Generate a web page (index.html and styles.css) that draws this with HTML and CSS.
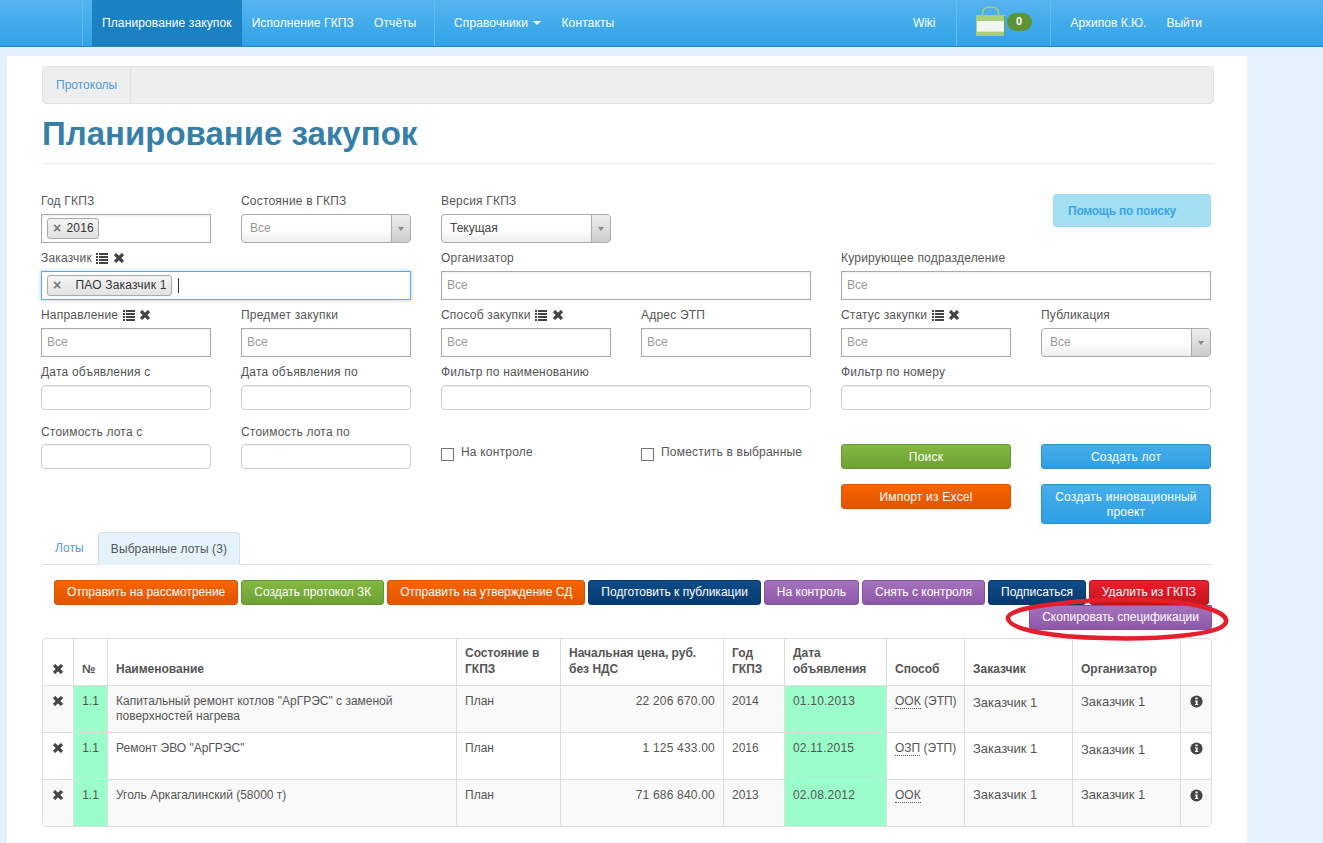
FILE: index.html
```html
<!DOCTYPE html>
<html lang="ru">
<head>
    <meta charset="UTF-8">
    <title>Планирование закупок</title>
    <link rel="stylesheet" href="styles.css">
</head>
<body>

<svg class="icon-defs" width="0" height="0">
    <symbol id="i-remove" viewBox="0 0 12 12">
        <path d="M1.2 3.2 3.2 1.2 6 4 8.8 1.2 10.8 3.2 8 6 10.8 8.800 8.800 10.800 6 8 3.200 10.800 1.200 8.800 4 6Z" fill="currentColor" stroke="currentColor" stroke-width=".6" stroke-linejoin="round"/>
    </symbol>
    <symbol id="i-list" viewBox="0 0 12 12">
        <path d="M0 1h2v2H0zM3 1h9v2H3zM0 4h2v2H0zM3 4h9v2H3zM0 7h2v2H0zM3 7h9v2H3zM0 10h2v2H0zM3 10h9v2H3z" fill="currentColor"/>
    </symbol>
    <symbol id="i-info" viewBox="0 0 12 12">
        <circle cx="6" cy="6" r="5.600" fill="currentColor"/>
        <path d="M5 2.300h2v1.700H5zM4.600 5h2.400v3.200h.6v1.100H4.600V8.200h.7V6.100h-.7z" fill="#fff"/>
    </symbol>
</svg>

<!-- top menu -->
<div class="navbar">
    <div class="nav-group nav-main">
        <a class="nav-link active" href="#">Планирование закупок</a>
        <a class="nav-link" href="#">Исполнение ГКПЗ</a>
        <a class="nav-link" href="#">Отчёты</a>
    </div>
    <div class="nav-group nav-refs">
        <a class="nav-link" href="#">Справочники <span class="caret"></span></a>
        <a class="nav-link" href="#">Контакты</a>
    </div>
    <div class="nav-right">
        <a class="nav-link" href="#">Wiki</a>
        <div class="nav-cart">
            <svg class="cart-bag" width="30" height="30" viewBox="0 0 30 30">
                <path d="M6.500 10V7C6.500 3 10 1 14.500 1S22.500 3 22.500 7V10" fill="none" stroke="#a4cf7c" stroke-width="1.500"/>
                <rect x="0" y="9" width="29" height="21" fill="#a7d07a"/>
                <rect x="1" y="15" width="27" height="10" fill="#f3f5f0"/>
                <rect x="1" y="25" width="27" height="1" fill="#d8e8c6"/>
                <rect x="28" y="10" width="1" height="20" fill="#6fa04a"/>
            </svg>
            <span class="cart-count">0</span>
        </div>
        <a class="nav-link user" href="#">Архипов К.Ю.</a>
        <a class="nav-link" href="#">Выйти</a>
    </div>
</div>

<div class="page">
    <div class="subnav"><a href="#">Протоколы</a></div>

    <h1>Планирование закупок</h1>

    <form class="filters">
        <div class="field">
            <label>Год ГКПЗ</label>
            <div class="tokens"><span class="token"><b>×</b>2016</span></div>
        </div>
        <div class="field">
            <label>Состояние в ГКПЗ</label>
            <div class="combo"><span class="muted">Все</span><i class="combo-arrow"></i></div>
        </div>
        <div class="field">
            <label>Версия ГКПЗ</label>
            <div class="combo"><span>Текущая</span><i class="combo-arrow"></i></div>
        </div>
        <div class="help-cell"><button type="button" class="help-btn">Помощь по поиску</button></div>

        <div class="field wide">
            <label>Заказчик <svg class="ico"><use href="#i-list"/></svg> <svg class="ico"><use href="#i-remove"/></svg></label>
            <div class="tokens focused"><span class="token token-long"><b>×</b>ПАО Заказчик 1</span><span class="cursor"></span></div>
        </div>
        <div class="field wide">
            <label>Организатор</label>
            <div class="tokens muted">Все</div>
        </div>
        <div class="field wide">
            <label>Курирующее подразделение</label>
            <div class="tokens muted">Все</div>
        </div>

        <div class="field">
            <label>Направление <svg class="ico"><use href="#i-list"/></svg> <svg class="ico"><use href="#i-remove"/></svg></label>
            <div class="tokens muted">Все</div>
        </div>
        <div class="field">
            <label>Предмет закупки</label>
            <div class="tokens muted">Все</div>
        </div>
        <div class="field">
            <label>Способ закупки <svg class="ico"><use href="#i-list"/></svg> <svg class="ico"><use href="#i-remove"/></svg></label>
            <div class="tokens muted">Все</div>
        </div>
        <div class="field">
            <label>Адрес ЭТП</label>
            <div class="tokens muted">Все</div>
        </div>
        <div class="field">
            <label>Статус закупки <svg class="ico"><use href="#i-list"/></svg> <svg class="ico"><use href="#i-remove"/></svg></label>
            <div class="tokens muted">Все</div>
        </div>
        <div class="field">
            <label>Публикация</label>
            <div class="combo"><span class="muted">Все</span><i class="combo-arrow"></i></div>
        </div>

        <div class="field">
            <label>Дата объявления с</label>
            <input class="text-input" type="text">
        </div>
        <div class="field">
            <label>Дата объявления по</label>
            <input class="text-input" type="text">
        </div>
        <div class="field wide">
            <label>Фильтр по наименованию</label>
            <input class="text-input" type="text">
        </div>
        <div class="field wide">
            <label>Фильтр по номеру</label>
            <input class="text-input" type="text">
        </div>

        <div class="field row5">
            <label>Стоимость лота с</label>
            <input class="text-input" type="text">
        </div>
        <div class="field row5">
            <label>Стоимость лота по</label>
            <input class="text-input" type="text">
        </div>
        <label class="check"><span class="check-box"></span>На контроле</label>
        <label class="check"><span class="check-box"></span>Поместить в выбранные</label>
        <div class="btn-stack">
            <button type="button" class="btn btn-green">Поиск</button>
            <button type="button" class="btn btn-orange">Импорт из Excel</button>
        </div>
        <div class="btn-stack">
            <button type="button" class="btn btn-blue">Создать лот</button>
            <button type="button" class="btn btn-blue btn-tall">Создать инновационный проект</button>
        </div>
    </form>

    <div class="tabs">
        <a class="tab" href="#">Лоты</a>
        <a class="tab active" href="#">Выбранные лоты (3)</a>
    </div>

    <div class="actions">
        <button type="button" class="btn btn-orange">Отправить на рассмотрение</button>
        <button type="button" class="btn btn-green">Создать протокол ЗК</button>
        <button type="button" class="btn btn-orange">Отправить на утверждение СД</button>
        <button type="button" class="btn btn-navy">Подготовить к публикации</button>
        <button type="button" class="btn btn-purple">На контроль</button>
        <button type="button" class="btn btn-purple">Снять с контроля</button>
        <button type="button" class="btn btn-navy">Подписаться</button>
        <button type="button" class="btn btn-red">Удалить из ГКПЗ</button>
        <button type="button" class="btn btn-purple btn-copy">Скопировать спецификации</button>
        <svg class="red-ring" width="230" height="48" viewBox="0 0 230 48">
            <path d="M60 7C110 1 170 3 200 11C219 16 226 22 222 28C215 38 160 44 100 42C50 41 8 34 5 23C3 15 30 9 84 5" fill="none" stroke="#e2202c" stroke-width="4.500"/>
        </svg>
    </div>

    <table class="lots">
        <colgroup>
            <col class="c-x"><col class="c-num"><col class="c-name"><col class="c-state"><col class="c-price">
            <col class="c-year"><col class="c-date"><col class="c-way"><col class="c-cust"><col class="c-org"><col class="c-info">
        </colgroup>
        <thead>
            <tr>
                <th><svg class="ico"><use href="#i-remove"/></svg></th>
                <th>№</th>
                <th>Наименование</th>
                <th>Состояние в ГКПЗ</th>
                <th>Начальная цена, руб. без НДС</th>
                <th>Год ГКПЗ</th>
                <th>Дата объявления</th>
                <th>Способ</th>
                <th>Заказчик</th>
                <th>Организатор</th>
                <th></th>
            </tr>
        </thead>
        <tbody>
            <tr>
                <td class="mid"><svg class="ico"><use href="#i-remove"/></svg></td>
                <td class="mint mid">1.1</td>
                <td>Капитальный ремонт котлов "АрГРЭС" с заменой поверхностей нагрева</td>
                <td>План</td>
                <td class="num">22 206 670.00</td>
                <td>2014</td>
                <td class="mint date">01.10.2013</td>
                <td class="way"><span class="dotted">ООК</span> (ЭТП)</td>
                <td class="name-cell shift-down">Заказчик 1</td>
                <td class="name-cell">Заказчик 1</td>
                <td class="mid info"><svg class="ico"><use href="#i-info"/></svg></td>
            </tr>
            <tr>
                <td class="mid"><svg class="ico"><use href="#i-remove"/></svg></td>
                <td class="mint mid">1.1</td>
                <td>Ремонт ЭВО "АрГРЭС"</td>
                <td>План</td>
                <td class="num">1 125 433.00</td>
                <td>2016</td>
                <td class="mint date">02.11.2015</td>
                <td class="way"><span class="dotted">ОЗП</span> (ЭТП)</td>
                <td class="name-cell">Заказчик 1</td>
                <td class="name-cell shift-down">Заказчик 1</td>
                <td class="mid info"><svg class="ico"><use href="#i-info"/></svg></td>
            </tr>
            <tr>
                <td class="mid"><svg class="ico"><use href="#i-remove"/></svg></td>
                <td class="mint mid">1.1</td>
                <td>Уголь Аркагалинский (58000 т)</td>
                <td>План</td>
                <td class="num">71 686 840.00</td>
                <td>2013</td>
                <td class="mint date">02.08.2012</td>
                <td class="way"><span class="dotted">ООК</span></td>
                <td class="name-cell shift-up">Заказчик 1</td>
                <td class="name-cell shift-up">Заказчик 1</td>
                <td class="mid info"><svg class="ico"><use href="#i-info"/></svg></td>
            </tr>
        </tbody>
    </table>
</div>

</body>
</html>
```

FILE: styles.css
```css
* {
    box-sizing: border-box;
}
html, body {
    height: 100%;
}
body {
    margin: 0;
    font-family: "Liberation Sans", Arial, sans-serif;
    font-size: 12px;
    line-height: 16px;
    color: #555;
    background-color: #e4f3fb;
    overflow: hidden;
}
a {
    text-decoration: none;
}
.icon-defs {
    display: block;
    height: 0;
}
.ico {
    display: inline-block;
    width: 12px;
    height: 12px;
    color: #444;
    vertical-align: -2px;
}

/* top menu */
.navbar {
    display: flex;
    height: 47px;
    padding-left: 82px;
    background: linear-gradient(#55b4ee, #30a3e8);
    border-bottom: 1px solid #2a86c4;
}
.nav-group, .nav-right {
    display: flex;
    align-items: stretch;
}
.nav-main {
    padding-left: 9px;
    border-left: 1px solid #65baee;
    width: 352px;
    letter-spacing: .12px;
}
.nav-refs {
    padding-left: 9px;
    border-left: 1px solid #65baee;
    letter-spacing: .12px;
}
.nav-right {
    margin-left: auto;
    padding-right: 111px;
}
.nav-link {
    display: flex;
    align-items: center;
    padding: 0 10px;
    color: #fff;
    white-space: pre;
}
.nav-link.active {
    background: linear-gradient(#1c83c4, #1a80c0);
}
.caret {
    display: inline-block;
    margin-left: 2px;
    border-top: 4px solid #fff;
    border-left: 4px solid transparent;
    border-right: 4px solid transparent;
}
.nav-cart {
    position: relative;
    width: 95px;
    margin: 0 10px;
    border-left: 1px solid #65baee;
    border-right: 1px solid #65baee;
}
.cart-bag {
    position: absolute;
    left: 19px;
    top: 6px;
}
.cart-count {
    position: absolute;
    left: 50px;
    top: 13px;
    width: 25px;
    height: 18px;
    border-radius: 9px;
    background-color: #5f9436;
    color: #fff;
    font-size: 11px;
    font-weight: bold;
    line-height: 17px;
    text-align: center;
}
.user {
    padding-right: 10px;
}

/* page */
.page {
    position: relative;
    width: 1240px;
    height: 800px;
    margin: 9px 0 0 7px;
    padding: 10px 33px 0 35px;
    background-color: #fff;
}
.subnav {
    display: flex;
    height: 38px;
    background-color: #eee;
    border: 1px solid #e2e2e2;
    border-radius: 4px;
}
.subnav a {
    display: flex;
    align-items: center;
    padding: 0 13px;
    color: #4d9cd8;
    border-right: 1px solid #e2e2e2;
}
h1 {
    margin: 0 0 29px;
    padding: 11px 0 9px;
    height: 60px;
    color: #367fa9;
    font-size: 33px;
    line-height: 38px;
    font-weight: bold;
    border-bottom: 1px solid #eee;
}

/* filter form */
.filters {
    display: grid;
    grid-template-columns: repeat(6, 170px);
    column-gap: 30px;
    grid-template-rows: 57px 57px 57px 60px 112px;
    margin-left: -1px;
}
.field label {
    display: block;
    height: 21px;
    color: #555;
    letter-spacing: .2px;
    white-space: nowrap;
}
.field label .ico {
    margin-left: 1px;
}
.field.wide {
    grid-column: span 2;
}
.field.row5 label {
    height: 20px;
}
.tokens, .combo, .text-input {
    display: flex;
    align-items: center;
    width: 100%;
    font: inherit;
    color: #444;
}
.tokens {
    height: 29px;
    padding: 0 5px 1px;
    border: 1px solid #aaa;
    background: #fff;
    box-shadow: inset 0 1px 3px rgba(0,0,0,0.08);
}
.tokens.muted, .muted {
    color: #999;
}
.tokens.focused {
    border-color: #58a6ec;
    box-shadow: 0 0 4px rgba(82,168,236,0.5);
}
.token {
    display: inline-flex;
    align-items: center;
    height: 21px;
    padding: 0 4px 0 5px;
    color: #333;
    background: linear-gradient(#f4f4f4, #e2e2e2);
    border: 1px solid #aaa;
    border-radius: 3px;
    letter-spacing: .2px;
}
.token b {
    margin-right: 5px;
    color: #777;
    font-size: 14px;
}
.token-long b {
    margin-right: 14px;
}
.cursor {
    width: 1px;
    height: 15px;
    margin-left: 6px;
    background-color: #333;
}
.combo {
    position: relative;
    height: 29px;
    padding: 0 0 1px 8px;
    border: 1px solid #aaa;
    border-radius: 4px;
    background: linear-gradient(#fff 50%, #eee);
}
.combo-arrow {
    position: absolute;
    top: 0;
    right: 0;
    width: 19px;
    height: 27px;
    border-left: 1px solid #aaa;
    border-radius: 0 3px 3px 0;
    background: linear-gradient(#eee, #ccc);
}
.combo-arrow::after {
    content: "";
    position: absolute;
    left: 6px;
    top: 12px;
    border-top: 4px solid #888;
    border-left: 3px solid transparent;
    border-right: 3px solid transparent;
}
.text-input {
    height: 25px;
    padding: 0 6px;
    border: 1px solid #ccc;
    border-radius: 4px;
    background: #fff;
    box-shadow: inset 0 1px 1px rgba(0,0,0,0.07);
}
.help-cell {
    grid-column: 5 / span 2;
    display: flex;
    justify-content: flex-end;
    margin-top: 1px;
    align-items: flex-start;
}
.help-btn {
    width: 158px;
    height: 33px;
    padding: 0 0 0 14px;
    text-align: left;
    font: bold 12px "Liberation Sans", Arial, sans-serif;
    letter-spacing: -.25px;
    color: #3ba6e4;
    background-color: #a5e0f2;
    border: 1px solid #9adff2;
    border-radius: 3px;
}
.check {
    display: flex;
    align-items: flex-start;
    padding-top: 20px;
    color: #555;
    letter-spacing: .2px;
    white-space: nowrap;
}
.check-box {
    width: 13px;
    height: 13px;
    margin: 4px 7px 0 0;
    border: 1px solid #777;
    background-color: #fff;
}
.btn-stack {
    display: flex;
    flex-direction: column;
    gap: 15px;
    padding-top: 20px;
    align-items: stretch;
}
.btn-stack .btn {
    letter-spacing: .2px;
}

/* buttons */
.btn {
    height: 25px;
    padding: 0 12px;
    font: 12px/14px "Liberation Sans", Arial, sans-serif;
    color: #fff;
    border: 1px solid transparent;
    border-radius: 3px;
    white-space: nowrap;
}
.btn-stack .btn-tall {
    height: 40px;
    padding: 2px 8px 0;
    white-space: normal;
    line-height: 15px;
}
.btn-green {
    background: linear-gradient(#83b941, #6ea035);
    border-color: #62962e;
}
.btn-orange {
    background: linear-gradient(#f96400, #e05500);
    border-color: #d45400;
}
.btn-blue {
    background: linear-gradient(#45aeeb, #2f9fe4);
    border-color: #2d8fcb;
}
.btn-navy {
    background: linear-gradient(#0f4c88, #063a70);
    border-color: #063a70;
}
.btn-purple {
    background: linear-gradient(#a573bd, #8d57a8);
    border-color: #8552a0;
}
.btn-red {
    background: linear-gradient(#e8212b, #c4141d);
    border-color: #bb151d;
}

/* tabs */
.tabs {
    display: flex;
    align-items: flex-end;
    height: 33px;
    margin-top: -4px;
    margin-right: 2px;
    padding-left: 1px;
    border-bottom: 1px solid #ddd;
    letter-spacing: .1px;
}
.tab {
    display: block;
    height: 33px;
    margin-bottom: -1px;
    padding: 8px 12px 0;
    color: #4d9cd8;
}
.tab.active {
    margin-left: 2px;
    color: #555;
    background-color: #e4f3fb;
    border: 1px solid #ddd;
    border-bottom: none;
    border-radius: 4px 4px 0 0;
}

/* action buttons above the table */
.actions {
    position: relative;
    display: flex;
    flex-wrap: wrap;
    justify-content: flex-end;
    align-content: flex-start;
    gap: 0 3px;
    height: 58px;
    margin-top: 15px;
    padding-right: 5px;
}
.actions .btn {
    padding-bottom: 2px;
}
.actions .btn-copy {
    margin-right: -3px;
    border-radius: 0 0 3px 3px;
}
.red-ring {
    position: absolute;
    right: -19px;
    top: 16px;
    pointer-events: none;
}

/* table */
.lots {
    width: 1170px;
    table-layout: fixed;
    border-collapse: separate;
    border-spacing: 0;
    border: 1px solid #ddd;
    border-radius: 4px;
}
.c-x { width: 30px; }
.c-num { width: 34px; }
.c-name { width: 349px; }
.c-state { width: 104px; }
.c-price { width: 163px; }
.c-year { width: 61px; }
.c-date { width: 102px; }
.c-way { width: 78px; }
.c-cust { width: 108px; }
.c-org { width: 108px; }
.lots th, .lots td {
    border-left: 1px solid #ddd;
    padding: 8px 8px 0;
    vertical-align: top;
}
.lots th:first-child, .lots td:first-child {
    border-left: none;
}
.lots th {
    height: 46px;
    padding: 6px 8px 8px;
    vertical-align: bottom;
    text-align: left;
    font-weight: bold;
    color: #555;
}
.lots td {
    height: 47px;
    line-height: 15px;
    background-color: #f9f9f9;
    border-top: 1px solid #ddd;
    color: #555;
}
.lots tr:nth-child(even) td {
    background-color: #fff;
}
.lots th:first-child, .lots .mid {
    padding-left: 0;
    padding-right: 0;
    text-align: center;
}
.lots tr td.mint {
    background-color: #9bfdc9;
}
.lots td.num {
    text-align: right;
    letter-spacing: .2px;
}
.lots td.date {
    letter-spacing: .2px;
}
.lots td.way {
    padding-right: 0;
    white-space: nowrap;
}
.dotted {
    border-bottom: 1px dotted #555;
}
.lots td.name-cell {
    font-size: 13px;
}
.lots td.shift-down {
    padding-top: 9px;
}
.lots td.shift-up {
    padding-top: 7px;
}
.lots td.info {
    padding-top: 9px;
}
.info .ico {
    width: 13px;
    height: 13px;
}
```
